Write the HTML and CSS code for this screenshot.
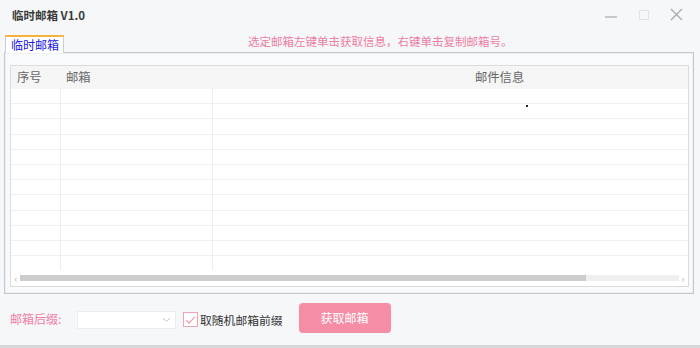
FILE: index.html
```html
<!DOCTYPE html>
<html lang="zh-CN">
<head>
  <meta charset="UTF-8">
  <title>临时邮箱 V1.0</title>
  <link rel="stylesheet" href="styles.css">
</head>
<body>
  <div class="window">
    <div class="titlebar">
      <span class="title">临时邮箱 V1.0</span>
      <div class="controls">
        <span class="ctl ctl-min"><svg width="14" height="12" viewBox="0 0 14 12"><line x1="1" y1="7" x2="13" y2="7" stroke="#9a9a9a" stroke-width="1"/></svg></span>
        <span class="ctl ctl-max"><svg width="12" height="12" viewBox="0 0 12 12"><rect x="1.5" y="1.5" width="9" height="9" fill="none" stroke="#e2e2e2" stroke-width="1"/></svg></span>
        <span class="ctl ctl-close"><svg width="13" height="13" viewBox="0 0 13 13"><path d="M1 1L12 12M12 1L1 12" stroke="#a8a8a8" stroke-width="1.2"/></svg></span>
      </div>
    </div>

    <div class="tabbar">
      <div class="tab">临时邮箱</div>
      <div class="hint">选定邮箱左键单击获取信息，右键单击复制邮箱号。</div>
    </div>

    <div class="panel">
      <div class="listview">
        <div class="lv-head">
          <div class="col col-no">序号</div>
          <div class="col col-mail">邮箱</div>
          <div class="col col-info">邮件信息</div>
        </div>
        <div class="lv-body">
          <div class="row"><div class="cell c1"></div><div class="cell c2"></div><div class="cell c3"></div></div>
          <div class="row"><div class="cell c1"></div><div class="cell c2"></div><div class="cell c3"><span class="dot"></span></div></div>
          <div class="row"><div class="cell c1"></div><div class="cell c2"></div><div class="cell c3"></div></div>
          <div class="row"><div class="cell c1"></div><div class="cell c2"></div><div class="cell c3"></div></div>
          <div class="row"><div class="cell c1"></div><div class="cell c2"></div><div class="cell c3"></div></div>
          <div class="row"><div class="cell c1"></div><div class="cell c2"></div><div class="cell c3"></div></div>
          <div class="row"><div class="cell c1"></div><div class="cell c2"></div><div class="cell c3"></div></div>
          <div class="row"><div class="cell c1"></div><div class="cell c2"></div><div class="cell c3"></div></div>
          <div class="row"><div class="cell c1"></div><div class="cell c2"></div><div class="cell c3"></div></div>
          <div class="row"><div class="cell c1"></div><div class="cell c2"></div><div class="cell c3"></div></div>
          <div class="row"><div class="cell c1"></div><div class="cell c2"></div><div class="cell c3"></div></div>
          <div class="row last"><div class="cell c1"></div><div class="cell c2"></div><div class="cell c3"></div></div>
        </div>
        <div class="hscroll">
          <span class="arrow">‹</span>
          <div class="track"><div class="thumb"></div></div>
          <span class="arrow">›</span>
        </div>
      </div>
    </div>

    <div class="footer">
      <span class="suffix-label">邮箱后缀:</span>
      <div class="combo">
        <svg class="chev" width="9" height="6" viewBox="0 0 9 6"><path d="M1 1L4.5 4.5L8 1" fill="none" stroke="#c4c4c4" stroke-width="1"/></svg>
      </div>
      <label class="check">
        <span class="box"><svg width="14" height="14" viewBox="0 0 14 14"><path d="M2.5 7.5L5.5 10.5L11.5 3.5" fill="none" stroke="#f08aa6" stroke-width="1.2"/></svg></span>
        <span class="check-text">取随机邮箱前缀</span>
      </label>
      <button class="btn">获取邮箱</button>
    </div>
  </div>
</body>
</html>
```

FILE: styles.css
```css
body {
  margin: 0;
  font-family: "Noto Sans CJK SC", "Noto Sans", sans-serif;
  font-size: 12px;
  background-color: #f6f7f9;
}

.window {
  width: 700px;
  height: 348px;
  box-sizing: border-box;
  border-bottom: 3px solid #d6d7da;
  display: flex;
  flex-direction: column;
}

.titlebar {
  height: 31px;
  display: flex;
  align-items: center;
  justify-content: space-between;
  padding-left: 12px;
}

.title {
  font-weight: bold;
  color: #3a3a3a;
  font-size: 11.5px;
  margin-top: -2px;
}

.controls {
  display: flex;
  align-items: center;
  gap: 18px;
  padding-right: 16px;
  margin-top: -2px;
}

.ctl {
  width: 15px;
  display: flex;
  justify-content: center;
}

.ctl-min svg {
  margin-top: 2px;
}

.tabbar {
  height: 21px;
  display: flex;
  align-items: flex-end;
  padding-left: 5px;
}

.tab {
  width: 59px;
  height: 18px;
  box-sizing: border-box;
  border-top: 2px solid #f5b23d;
  border-left: 1px solid #c8ccd4;
  border-right: 1px solid #c8ccd4;
  background-color: #ffffff;
  color: #2020e0;
  font-size: 12px;
  line-height: 15px;
  padding-left: 5px;
  margin-bottom: -1px;
  position: relative;
  z-index: 1;
}

.hint {
  color: #ec7ea3;
  font-size: 11.5px;
  margin-left: 184px;
  align-self: center;
  margin-top: -2px;
}

.panel {
  margin: 0 6px 0 4px;
  height: 242px;
  box-sizing: border-box;
  border: 1px solid #c3c7cf;
  box-shadow: inset 0 0 0 1px #eef0f3;
  background-color: #f9fafb;
  padding: 12px 4px 6px 5px;
}

.listview {
  height: 100%;
  box-sizing: border-box;
  border: 1px solid #dcdcdc;
  background-color: #ffffff;
  display: flex;
  flex-direction: column;
}

.lv-head {
  height: 23px;
  display: flex;
  background-color: #f5f5f5;
  color: #666666;
  font-size: 12.3px;
  line-height: 22px;
}

.col-no {
  width: 50px;
  padding-left: 6px;
  box-sizing: border-box;
}

.col-mail {
  width: 152px;
  padding-left: 5px;
  box-sizing: border-box;
}

.col-info {
  flex: 1;
  padding-left: 262px;
}

.lv-body {
  flex: 1;
  overflow: hidden;
}

.row {
  height: 15.2px;
  display: flex;
  box-sizing: border-box;
  border-bottom: 1px solid #efefef;
}

.row.last {
  border-bottom: none;
}

.cell {
  box-sizing: border-box;
}

.c1 {
  width: 50px;
  border-right: 1px solid #eeeeee;
}

.c2 {
  width: 152px;
  border-right: 1px solid #eeeeee;
}

.c3 {
  flex: 1;
  position: relative;
}

.dot {
  position: absolute;
  left: 313px;
  top: 1px;
  width: 2px;
  height: 2px;
  background-color: #222222;
}

.hscroll {
  height: 16px;
  display: flex;
  align-items: center;
  padding: 0 2px;
  color: #b8b8b8;
  font-size: 11px;
}

.arrow {
  width: 6px;
  text-align: center;
  line-height: 10px;
}

.track {
  flex: 1;
  height: 6px;
  background-color: #efefef;
  margin: 0 1px;
}

.thumb {
  width: 566px;
  height: 100%;
  background-color: #cdcdcd;
}

.footer {
  flex: 1;
  display: flex;
  align-items: center;
  padding-left: 10px;
  padding-bottom: 2px;
}

.suffix-label {
  color: #f07ea4;
  font-size: 12px;
  width: 67px;
}

.combo {
  width: 99px;
  height: 18px;
  box-sizing: border-box;
  border: 1px solid #ececec;
  background-color: #ffffff;
  display: flex;
  align-items: center;
  justify-content: flex-end;
  padding-right: 4px;
  margin-top: 2px;
}

.check {
  display: flex;
  align-items: center;
  margin-left: 7px;
  margin-top: 2px;
}

.box {
  width: 15px;
  height: 15px;
  box-sizing: border-box;
  border: 1px solid #f2a2b8;
  background-color: #ffffff;
  display: flex;
  align-items: center;
  justify-content: center;
}

.check-text {
  color: #333333;
  font-size: 11.8px;
  margin-left: 2px;
}

.btn {
  margin-left: 16px;
  width: 92px;
  height: 30px;
  border: none;
  border-radius: 4px;
  background-color: #f58da6;
  color: #ffffff;
  font-family: "Noto Sans CJK SC", sans-serif;
  font-size: 12px;
  margin-top: -2px;
}
```
